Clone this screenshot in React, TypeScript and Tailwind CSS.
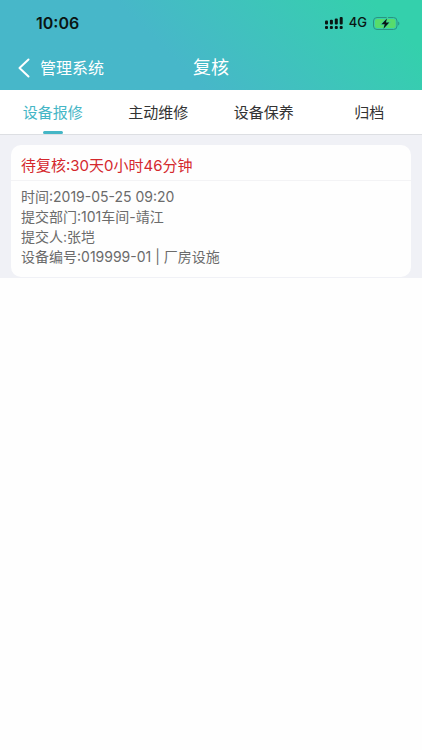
import React, { useState } from 'react';

const tabs = ['设备报修', '主动维修', '设备保养', '归档'];

const records = [
  {
    id: '019999-01',
    pending: '30天0小时46分钟',
    time: '2019-05-25 09:20',
    department: '101车间-靖江',
    submitter: '张垲',
    category: '厂房设施',
  },
];

const SignalIcon = () => (
  <svg className="h-3 w-[18px]" viewBox="0 0 18 12" fill="#0a1513" aria-hidden="true">
    <rect x="0" y="3.4" width="3" height="4.2" rx="1" />
    <rect x="4.9" y="2.8" width="3" height="4.8" rx="1" />
    <rect x="9.8" y="1.4" width="3" height="6.2" rx="1" />
    <rect x="14.7" y="0" width="3" height="7.6" rx="1" />
    <rect x="0" y="9" width="3" height="3" rx="1" />
    <rect x="4.9" y="9" width="3" height="3" rx="1" />
    <rect x="9.8" y="9" width="3" height="3" rx="1" />
    <rect x="14.7" y="9" width="3" height="3" rx="1" />
  </svg>
);

const BatteryIcon = () => (
  <svg className="h-[13px] w-[27px]" viewBox="0 0 27 13" aria-hidden="true">
    <rect x="0.5" y="0.5" width="23.5" height="12" rx="3.5" fill="none" stroke="#2a9482" />
    <rect x="2" y="2" width="20.5" height="9" rx="2" fill="#57dc6c" />
    <path d="M25.2 4.5c1.6.5 1.6 3.5 0 4z" fill="#2a9482" />
    <path
      d="M14 1.4 8.4 7.2h3.3l-1.2 4.5 5.8-6.1h-3.4z"
      fill="#0a1513"
      stroke="#3dd19a"
      strokeWidth="1.6"
      paintOrder="stroke"
    />
  </svg>
);

const StatusBar = () => (
  <div className="flex h-[46px] items-center justify-between pl-9 pr-[22px] text-[#0a1513]">
    <span className="text-base font-semibold">10:06</span>
    <div className="flex items-center gap-1.5">
      <SignalIcon />
      <span className="text-[13px] font-medium">4G</span>
      <BatteryIcon />
    </div>
  </div>
);

const Header = () => (
  <header className="bg-linear-45 from-[#47b7c9] from-40% to-[#34d0ac] to-90%">
    <StatusBar />
    <div className="grid h-11 grid-cols-3 items-center px-[18px] text-white">
      <button type="button" className="flex items-center gap-2.5 text-base">
        <svg className="h-5 w-3" viewBox="0 0 12 20" fill="none" stroke="currentColor" strokeWidth="2" aria-hidden="true">
          <path d="M10.5 1.5 1.5 10l9 8.5" strokeLinecap="round" strokeLinejoin="round" />
        </svg>
        管理系统
      </button>
      <h1 className="text-center text-lg">复核</h1>
    </div>
  </header>
);

const App = () => {
  const [active, setActive] = useState(0);

  return (
    <div className="min-h-screen bg-[#fefefe] font-['Inter','Noto_Sans_CJK_SC',sans-serif]">
      <Header />
      <nav className="grid h-[45px] grid-cols-4 border-b border-[#dddfe3] bg-white">
        {tabs.map((tab, index) => (
          <button
            key={tab}
            type="button"
            onClick={() => setActive(index)}
            className={`flex flex-col items-center pt-1.5 text-[15px] ${
              active === index ? 'text-[#45b6c6]' : 'text-[#333333]'
            }`}
          >
            <span className="flex flex-1 items-center">{tab}</span>
            <span className={`h-[3px] w-5 rounded-sm ${active === index ? 'bg-[#45b6c6]' : ''}`} />
          </button>
        ))}
      </nav>
      <main className="bg-[#f0f1f6] px-[11px] pb-px pt-2.5">
        {records.map((record) => (
          <article key={record.id} className="rounded-[10px] bg-[#fefefe]">
            <h2 className="border-b border-[#f3f3f5] px-2.5 pb-0.5 pt-2 text-[15px] leading-[25px] text-[#d4282d]">
              待复核:{record.pending}
            </h2>
            <div className="px-2.5 pb-2.5 pt-1.5 text-sm leading-5 text-[#6b6b6b]">
              <p>时间:{record.time}</p>
              <p>提交部门:{record.department}</p>
              <p>提交人:{record.submitter}</p>
              <p>
                设备编号:{record.id} | {record.category}
              </p>
            </div>
          </article>
        ))}
      </main>
    </div>
  );
};

export default App;
